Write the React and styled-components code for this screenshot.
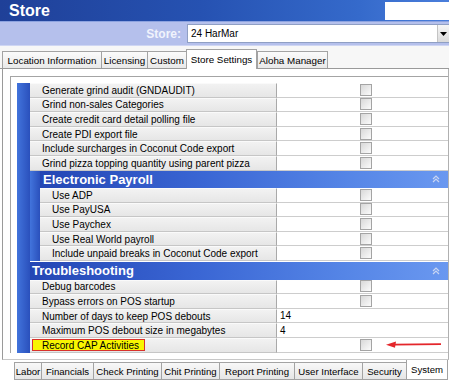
import styled, { createGlobalStyle } from "styled-components"

const GlobalStyle = createGlobalStyle`
  html, body { margin: 0; padding: 0; background: #fff; }
  body { font-family: "Liberation Sans", Arial, sans-serif; }
  * { box-sizing: border-box; }
`

const topTabs = [
  { name: "Location Information", w: 99 },
  { name: "Licensing", w: 46 },
  { name: "Custom", w: 39 },
  { name: "Store Settings", w: 71, active: true },
  { name: "Aloha Manager", w: 71 },
]

const bottomTabs = [
  { name: "Labor", w: 27 },
  { name: "Financials", w: 52 },
  { name: "Check Printing", w: 68 },
  { name: "Chit Printing", w: 58 },
  { name: "Report Printing", w: 75 },
  { name: "User Interface", w: 68 },
  { name: "Security", w: 44 },
  { name: "System", w: 42, active: true },
]

const general = [
  { label: "Generate grind audit (GNDAUDIT)" },
  { label: "Grind non-sales Categories" },
  { label: "Create credit card detail polling file" },
  { label: "Create PDI export file" },
  { label: "Include surcharges in Coconut Code export" },
  { label: "Grind pizza topping quantity using parent pizza" },
]

const payroll = [
  { label: "Use ADP" },
  { label: "Use PayUSA" },
  { label: "Use Paychex" },
  { label: "Use Real World payroll" },
  { label: "Include unpaid breaks in Coconut Code export" },
]

const trouble = [
  { label: "Debug barcodes" },
  { label: "Bypass errors on POS startup" },
  { label: "Number of days to keep POS debouts", value: "14" },
  { label: "Maximum POS debout size in megabytes", value: "4" },
  { label: "Record CAP Activities", mark: true },
]

const Collapse = () => (
  <svg width='8' height='8' viewBox='0 0 8 8'>
    <path d='M1 4 L4 1 L7 4 M1 7 L4 4 L7 7' fill='none' stroke='#c9d5f2' strokeWidth='1.2' />
  </svg>
)

const Rows = ({ items }) =>
  items.map((r) => (
    <Row key={r.label}>
      <Label $mark={r.mark}>
        {r.mark ? <Mark>{r.label}</Mark> : r.label}
      </Label>
      <Value $text={!!r.value}>{r.value ? r.value : <Check />}</Value>
    </Row>
  ))

const App = () => {
  return (
    <Window>
      <GlobalStyle />
      <TitleBar>
        <Title>Store</Title>
        <TitleBox />
      </TitleBar>
      <StoreRow>
        <StoreLabel>Store:</StoreLabel>
        <Select>
          <SelectText>24 HarMar</SelectText>
          <DropButton>
            <svg width='7' height='4' viewBox='0 0 7 4'>
              <path d='M0 0 H7 L3.5 4 Z' fill='#000' />
            </svg>
          </DropButton>
        </Select>
      </StoreRow>
      <TopStrip>
        {topTabs.map((t) => (
          <TopTab key={t.name} $w={t.w} $active={t.active}>
            {t.name}
          </TopTab>
        ))}
      </TopStrip>
      <Panel>
        <Grid>
          <Group>
            <Strip $w={13} />
            <Body>
              <Rows items={general} />
              <Group>
                <Strip $w={10} />
                <Body>
                  <Header $pad={3}>
                    Electronic Payroll
                    <Collapse />
                  </Header>
                  <Rows items={payroll} />
                </Body>
              </Group>
              <Header $pad={2} $gap>
                Troubleshooting
                <Collapse />
              </Header>
              <Rows items={trouble} />
            </Body>
          </Group>
        </Grid>
      </Panel>
      <BottomStrip>
        {bottomTabs.map((t) => (
          <BottomTab key={t.name} $w={t.w} $active={t.active}>
            {t.name}
          </BottomTab>
        ))}
      </BottomStrip>
      <Arrow width='58' height='10' viewBox='0 0 58 10'>
        <path d='M56 5.2 L9 5.6' stroke='#e4262b' strokeWidth='1.8' fill='none' />
        <path d='M1 5.8 L11 2.4 L10 8.8 Z' fill='#e4262b' />
      </Arrow>
    </Window>
  )
}

const Window = styled.div`
  position: relative;
  width: 449px;
  height: 384px;
  overflow: hidden;
  display: flex;
  flex-direction: column;
  background: #fff;
`

const TitleBar = styled.div`
  height: 21px;
  flex-shrink: 0;
  display: flex;
  justify-content: space-between;
  align-items: flex-start;
  padding-left: 9px;
  background: linear-gradient(to right, #1f4098 0%, #2652b2 45%, #356acb 80%, #4a7edb 100%);
`

const Title = styled.h1`
  margin: 0;
  color: #fff;
  font-size: 16px;
  font-weight: bold;
  line-height: 21px;
`

const TitleBox = styled.div`
  width: 64px;
  height: 18px;
  margin-top: 2px;
  background: #fff;
`

const StoreRow = styled.div`
  height: 25px;
  flex-shrink: 0;
  display: flex;
  align-items: center;
  justify-content: flex-end;
  gap: 6px;
  border-top: 1px solid #8da3e0;
  border-bottom: 1px solid #cfd6f3;
  background: #b5c0ec;
`

const StoreLabel = styled.span`
  color: #f1f3fc;
  font-size: 12px;
  font-weight: bold;
`

const Select = styled.div`
  width: 262px;
  height: 19px;
  display: flex;
  background: #fff;
  border: 1px solid #8f9fc4;
  border-right: none;
`

const SelectText = styled.span`
  flex: 1;
  padding-left: 3px;
  font-size: 10px;
  line-height: 17px;
  color: #000;
`

const DropButton = styled.div`
  width: 12px;
  display: flex;
  align-items: center;
  justify-content: center;
  border-left: 1px solid #c4c4c4;
  background: linear-gradient(#f6f6f6, #dadada);
`

const TopStrip = styled.div`
  height: 23px;
  flex-shrink: 0;
  display: flex;
  align-items: flex-end;
  padding-left: 2px;
  border-bottom: 1px solid #9a9a9a;
  background: #f7f7f7;
`

const TopTab = styled.div`
  width: ${(p) => p.$w}px;
  height: ${(p) => (p.$active ? 20 : 17)}px;
  margin-bottom: ${(p) => (p.$active ? -1 : 0)}px;
  display: flex;
  align-items: center;
  justify-content: center;
  white-space: nowrap;
  font-size: 9.8px;
  color: #000;
  border: 1px solid #a3a3a3;
  border-bottom: none;
  border-right-width: ${(p) => (p.$active ? 1 : 0)}px;
  background: ${(p) => (p.$active ? "#fff" : "linear-gradient(#fbfbfb, #e9e9e9)")};
  &:last-child {
    border-right-width: 1px;
  }
`

const Panel = styled.div`
  flex: 1;
  margin-left: 2px;
  padding: 7px 0 6px 7px;
  border-left: 1px solid #9a9a9a;
  border-right: 1px solid #b0b0b0;
  border-bottom: 1px solid #c8c8c8;
`

const Grid = styled.div`
  padding: 6px 0 0 6px;
  border-top: 1px solid #a4a4a4;
  border-left: 1px solid #a4a4a4;
`

const Group = styled.div`
  display: flex;
`

const Strip = styled.div`
  width: ${(p) => p.$w}px;
  flex-shrink: 0;
  background: linear-gradient(to right, #4274dc, #2a50bc);
`

const Body = styled.div`
  flex: 1;
  display: flex;
  flex-direction: column;
`

const Row = styled.div`
  height: 14.6px;
  display: flex;
`

const Label = styled.div`
  flex: 1;
  display: flex;
  align-items: center;
  padding-left: ${(p) => (p.$mark ? 2 : 12)}px;
  font-size: 10px;
  color: #000;
  white-space: nowrap;
  overflow: hidden;
  border-top: 1px solid #fafafa;
  border-bottom: 1px solid #c6c6c6;
  border-right: 1px solid #a9a9a9;
  background: linear-gradient(#f2f2f2, #e6e6e6);
`

const Mark = styled.span`
  width: 113px;
  height: 12px;
  padding-left: 9px;
  display: flex;
  align-items: center;
  background: #f8f500;
  border: 1.5px solid #d8322c;
`

const Value = styled.div`
  width: 171px;
  flex-shrink: 0;
  display: flex;
  align-items: center;
  justify-content: ${(p) => (p.$text ? "flex-start" : "center")};
  padding-left: ${(p) => (p.$text ? 3 : 7)}px;
  font-size: 10px;
  color: #000;
  background: #fff;
  border-bottom: 1px solid #cdcdcd;
`

const Check = styled.span`
  width: 12px;
  height: 12px;
  border: 1px solid #a4a4a4;
  background: linear-gradient(135deg, #d8d8d8, #fbfbfb);
`

const Header = styled.div`
  height: 17.5px;
  margin-top: ${(p) => (p.$gap ? 1 : 0)}px;
  display: flex;
  align-items: center;
  justify-content: space-between;
  padding: 0 8px 0 ${(p) => p.$pad}px;
  color: #fff;
  font-size: 13px;
  font-weight: bold;
  background: linear-gradient(to right, #2446b4 0%, #3a66d4 40%, #5585e6 75%, #6a98f0 100%);
`

const BottomStrip = styled.div`
  height: 24px;
  flex-shrink: 0;
  display: flex;
  align-items: flex-start;
  padding-left: 14px;
`

const BottomTab = styled.div`
  width: ${(p) => p.$w}px;
  height: ${(p) => (p.$active ? 20 : 18)}px;
  margin-top: ${(p) => (p.$active ? 0 : 2)}px;
  display: flex;
  align-items: center;
  justify-content: center;
  white-space: nowrap;
  font-size: 9.6px;
  color: #000;
  border: 1px solid #a3a3a3;
  border-top: ${(p) => (p.$active ? "none" : "1px solid #a3a3a3")};
  border-right-width: ${(p) => (p.$active ? 1 : 0)}px;
  background: ${(p) => (p.$active ? "#fff" : "linear-gradient(#f8f8f8, #e6e6e6)")};
`

const Arrow = styled.svg`
  position: absolute;
  left: 385px;
  top: 339px;
`

export default App
